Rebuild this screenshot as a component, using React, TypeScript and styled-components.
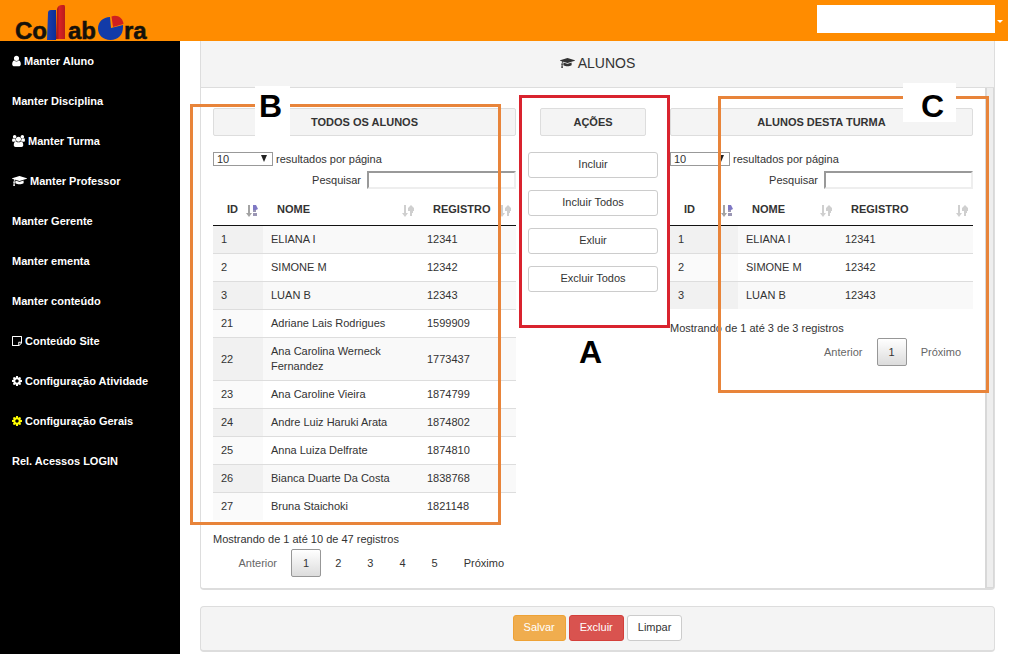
import React from "react";
import styled, { createGlobalStyle } from "styled-components";

const GlobalStyle = createGlobalStyle`
  *, *::before, *::after { box-sizing: border-box; }
  body {
    margin: 0;
    background: #fff;
    color: #333;
    font-family: "Liberation Sans", Arial, sans-serif;
    font-size: 11px;
    line-height: 15px;
  }
  button, input, select { font: inherit; color: inherit; }
`;

const Page = styled.div`
  display: flex;
  flex-direction: column;
  min-height: 100vh;
  padding-right: 2px;
`;

const TopBar = styled.header`
  display: flex;
  align-items: flex-start;
  justify-content: space-between;
  height: 41px;
  padding: 0 5px 0 15px;
  background: #ff8c00;
`;

const Logo = styled.svg`
  display: block;
  width: 136px;
  height: 41px;
  overflow: visible;
`;

const UserMenu = styled.button`
  display: flex;
  align-items: center;
  gap: 2px;
  height: 28px;
  margin-top: 5px;
  padding: 0;
  border: 0;
  background: none;
`;

const UserName = styled.span`
  width: 178px;
  height: 28px;
  background: #fff;
`;

const Caret = styled.span`
  margin-top: 4px;
  border: 3px solid transparent;
  border-top-color: #fff;
  border-bottom: 0;
`;

const Columns = styled.div`
  display: flex;
  flex: 1;
`;

const Sidebar = styled.nav`
  flex: 0 0 180px;
  background: #000;
`;

const MenuList = styled.ul`
  margin: 0;
  padding: 0;
  list-style: none;
`;

const MenuLink = styled.a`
  display: flex;
  align-items: center;
  gap: 3px;
  height: 40px;
  padding: 0 12px;
  color: #fff;
  font-weight: bold;
  text-decoration: none;
`;

const Main = styled.main`
  flex: 1;
  min-width: 0;
  padding: 0 13px 3px 20px;
`;

const Panel = styled.section`
  border: 1px solid #ddd;
  border-top: 0;
  border-bottom-width: 2px;
  border-radius: 0 0 4px 4px;
`;

const PanelTitle = styled.h1`
  display: flex;
  align-items: center;
  justify-content: center;
  gap: 3px;
  height: 47px;
  margin: 0;
  padding-bottom: 2px;
  border-bottom: 1px solid #ddd;
  background: #f4f4f4;
  font-size: 14px;
  font-weight: normal;
`;

const PanelBody = styled.div`
  display: flex;
`;

const Workspace = styled.div`
  flex: 1;
  min-width: 0;
  display: grid;
  grid-template-columns: minmax(0, 1fr) 154px minmax(0, 1fr);
  align-items: start;
  padding: 20px 12px 11px;
`;

const ScrollTrack = styled.div`
  flex: 0 0 9px;
  border: solid #d8d8d8;
  border-width: 0 1px 1px 2px;
  background: #eee;
`;

const Column = styled.div`
  position: relative;
`;

const ActionsColumn = styled(Column)`
  display: flex;
  flex-direction: column;
  gap: 12px;
  padding: 0 12px;
  z-index: 1;
`;

const BoxTitle = styled.h2<{ $inset?: boolean }>`
  height: 28px;
  margin: ${(p) => (p.$inset ? "0 12px 4px" : "0 0 15px")};
  border: 1px solid #ddd;
  border-radius: 2px;
  background: #f4f4f4;
  font-size: 11px;
  line-height: 26px;
  text-align: center;
`;

const LengthRow = styled.label`
  display: flex;
  align-items: center;
  gap: 3px;
  height: 16px;
  margin-bottom: 4px;
`;

const SelectBox = styled.span`
  position: relative;
  display: flex;
`;

const Select = styled.select`
  appearance: none;
  width: 60px;
  height: 14px;
  padding: 0 3px;
  border: 1px solid #999;
  border-radius: 0;
  background: #fff;
  line-height: 12px;
`;

const SelectArrow = styled.svg`
  position: absolute;
  top: 3px;
  right: 5px;
  width: 8px;
  height: 7px;
  pointer-events: none;
`;

const SearchRow = styled.label`
  display: flex;
  align-items: center;
  justify-content: flex-end;
  gap: 6px;
  height: 18px;
  margin-bottom: 4px;
`;

const SearchInput = styled.input`
  width: 149px;
  height: 18px;
  padding: 0 2px;
  border: 2px solid #eee;
  border-top-color: #999;
  border-left-color: #999;
  background: #fff;
`;

const Table = styled.table`
  width: 100%;
  border-collapse: separate;
  border-spacing: 0;
  table-layout: fixed;
`;

const Col = styled.col<{ $w?: number }>`
  width: ${(p) => (p.$w ? `${p.$w}px` : "auto")};
`;

const Th = styled.th`
  height: 33px;
  padding: 0 4px 0 14px;
  border-bottom: 1px solid #111;
  text-align: left;
`;

const ThInner = styled.div`
  display: flex;
  align-items: center;
  justify-content: space-between;
  white-space: nowrap;

  svg { margin-top: 4px; }
`;

const Tr = styled.tr`
  &:nth-child(odd) { background: #f9f9f9; }
  & > td:first-child { background: #fafafa; }
  &:nth-child(odd) > td:first-child { background: #f1f1f1; }
  & + & > td { border-top: 1px solid #ddd; }
`;

const Td = styled.td`
  padding: 6px 8px;
`;

const Info = styled.p`
  margin: 12px 0 2px;
`;

const Pager = styled.div`
  display: flex;
  justify-content: flex-end;
  gap: 2px;
`;

const PageButton = styled.button<{ $current?: boolean; $muted?: boolean }>`
  height: 28px;
  padding: 0 11px;
  border: 1px solid ${(p) => (p.$current ? "#979797" : "transparent")};
  border-radius: 2px;
  background: ${(p) => (p.$current ? "linear-gradient(#fff, #dcdcdc)" : "transparent")};
  color: ${(p) => (p.$muted ? "#666" : "#333")};
`;

const tones = {
  plain: { bg: "#fff", border: "#ccc", text: "#333" },
  warning: { bg: "#f0ad4e", border: "#eea236", text: "#fff" },
  danger: { bg: "#d9534f", border: "#d43f3a", text: "#fff" },
};

const Button = styled.button<{ $tone?: keyof typeof tones }>`
  height: 26px;
  padding: 0 10px 2px;
  border: 1px solid ${(p) => tones[p.$tone ?? "plain"].border};
  border-radius: 3px;
  background: ${(p) => tones[p.$tone ?? "plain"].bg};
  color: ${(p) => tones[p.$tone ?? "plain"].text};
`;

const FooterPanel = styled.footer`
  display: flex;
  justify-content: center;
  gap: 3px;
  margin-top: 16px;
  padding: 8px 0 9px;
  border: 1px solid #ddd;
  border-bottom-width: 2px;
  border-radius: 4px;
  background: #f4f4f4;
`;

/* Frames and letters drawn over the columns */
const Frame = styled.div<{ $color: string; $inset: string }>`
  position: absolute;
  inset: ${(p) => p.$inset};
  border: 3px solid ${(p) => p.$color};
  pointer-events: none;
`;

const Letter = styled.span<{ $inset: string; $pad: string }>`
  position: absolute;
  inset: ${(p) => p.$inset};
  padding: ${(p) => p.$pad};
  background: #fff;
  color: #000;
  font-size: 32px;
  font-weight: bold;
  line-height: 32px;
`;

const icons = {
  user: {
    x: 0,
    w: 1280,
    d: "M1280 1399q0 109-62.5 187t-150.5 78h-854q-88 0-150.5-78t-62.5-187q0-85 8.5-160.5t31.5-152 58.5-131 94-89 134.5-34.5q131 128 313 128t313-128q76 0 134.5 34.5t94 89 58.5 131 31.5 152 8.5 160.5zm-256-887q0 159-112.5 271.5t-271.5 112.5-271.5-112.5-112.5-271.5 112.5-271.5 271.5-112.5 271.5 112.5 112.5 271.5z",
  },
  group: {
    x: 64,
    w: 1920,
    d: "M657 896q-162 5-265 128h-134q-82 0-138-40.5t-56-118.5q0-353 124-353 6 0 43.5 21t97.5 42.5 119 21.5q67 0 133-23-5 37-5 66 0 159 90 287zm1071 637q0 120-73 189.5t-194 69.5h-874q-121 0-194-69.5t-73-189.5q0-53 3.5-103.5t14-109 26.5-108.5 43-97.5 62-81 85.5-53.5 111.5-20q10 0 43 21.5t73 48 107 48 135 21.5 135-21.5 107-48 73-48 43-21.5q61 0 111.5 20t85.5 53.5 62 81 43 97.5 26.5 108.5 14 109 3.5 103.5zm-1024-1277q0 106-75 181t-181 75-181-75-75-181 75-181 181-75 181 75 75 181zm704 384q0 159-112.5 271.5t-271.5 112.5-271.5-112.5-112.5-271.5 112.5-271.5 271.5-112.5 271.5 112.5 112.5 271.5zm576 225q0 78-56 118.5t-138 40.5h-134q-103-123-265-128 90-128 90-287 0-29-5-66 66 23 133 23 59 0 119-21.5t97.5-42.5 43.5-21q124 0 124 353zm-128-609q0 106-75 181t-181 75-181-75-75-181 75-181 181-75 181 75 75 181z",
  },
  cap: {
    x: 0,
    w: 2304,
    d: "M1774 836l18 316q4 69-82 128t-235 93.5-323 34.5-323-34.5-235-93.5-82-128l18-316 574 181q22 7 48 7t48-7zm530-324q0 23-22 31l-1120 352q-4 1-10 1t-10-1l-652-206q-43 34-71 111.5t-34 178.5q63 36 63 109 0 69-58 107l58 433q2 14-8 25-9 11-24 11h-192q-15 0-24-11-10-11-8-25l58-433q-58-38-58-107 0-73 65-111 11-207 98-330l-333-104q-22-8-22-31t22-31l1120-352q4-1 10-1t10 1l1120 352q22 8 22 31z",
  },
  note: {
    x: 0,
    w: 1536,
    d: "M96 128h1344q96 0 96 96v928q0 64-48 112l-352 352q-48 48-112 48H96q-96 0-96-96V224q0-96 96-96zM150 278v1236h810v-394q0-96 96-96h330V278zM1110 1174v330l276-330z",
  },
  cog: {
    x: 0,
    w: 1536,
    d: "M1024 896q0-106-75-181t-181-75-181 75-75 181 75 181 181 75 181-75 75-181zm512-109v222q0 12-8 23t-20 13l-185 28q-19 54-39 91 35 50 107 138 10 12 10 25t-9 23q-27 37-99 108t-94 71q-12 0-26-9l-138-108q-44 23-91 38-16 136-29 186-7 28-36 28h-222q-14 0-24.5-8.5t-11.5-21.5l-28-184q-49-16-90-37l-141 107q-10 9-25 9-14 0-25-11-126-114-165-168-7-10-7-23 0-12 8-23 15-21 51-66.5t54-70.5q-27-50-41-99l-183-27q-13-2-21-12.5t-8-23.5v-222q0-12 8-23t19-13l186-28q14-46 39-92-40-57-107-138-10-12-10-24 0-10 9-23 26-36 98.5-107.5t94.5-71.5q13 0 26 10l138 107q44-23 91-38 16-136 29-186 7-28 36-28h222q14 0 24.5 8.5t11.5 21.5l28 184q49 16 90 37l142-107q9-9 24-9 13 0 25 10 129 119 165 170 7 8 7 22 0 12-8 23-15 21-51 66.5t-54 70.5q26 50 41 98l183 28q13 2 21 12.5t8 23.5z",
  },
};

type IconName = keyof typeof icons;

function Icon({ name, color = "currentColor" }: { name: IconName; color?: string }) {
  const { x, w, d } = icons[name];
  return (
    <svg width={Math.round((w / 1792) * 12)} height={12} viewBox={`${x} 0 ${w} 1792`} fill={color} fillRule={name === "note" ? "evenodd" : "nonzero"} aria-hidden="true">
      <path d={d} />
    </svg>
  );
}

function SortIcon({ active }: { active?: boolean }) {
  return (
    <svg width="14" height="14" viewBox="0 0 14 14" aria-hidden="true">
      <path d="M3 1h2v8h2l-3 4-3-4h2z" fill={active ? "#a3a3a3" : "#cfcfcf"} />
      {active ? (
        <>
          <path d="M8 1h3l2 4-2 1H8z" fill="#7f78c4" />
          <path d="M8 6h3v2H8zM8 9h4v3H8z" fill="#9a96b4" />
        </>
      ) : (
        <path d="M9 12V7H7V4l3-3 3 3v3h-1v2h-1v3z" fill="#cfcfcf" />
      )}
    </svg>
  );
}

const menu: { label: string; icon?: IconName; color?: string }[] = [
  { label: "Manter Aluno", icon: "user" },
  { label: "Manter Disciplina" },
  { label: "Manter Turma", icon: "group" },
  { label: "Manter Professor", icon: "cap" },
  { label: "Manter Gerente" },
  { label: "Manter ementa" },
  { label: "Manter conteúdo" },
  { label: "Conteúdo Site", icon: "note" },
  { label: "Configuração Atividade", icon: "cog" },
  { label: "Configuração Gerais", icon: "cog", color: "#ff0" },
  { label: "Rel. Acessos LOGIN" },
];

type Student = [string, string, string];

const classStudents: Student[] = [
  ["1", "ELIANA I", "12341"],
  ["2", "SIMONE M", "12342"],
  ["3", "LUAN B", "12343"],
];

const allStudents: Student[] = [
  ...classStudents,
  ["21", "Adriane Lais Rodrigues", "1599909"],
  ["22", "Ana Carolina Werneck Fernandez", "1773437"],
  ["23", "Ana Caroline Vieira", "1874799"],
  ["24", "Andre Luiz Haruki Arata", "1874802"],
  ["25", "Anna Luiza Delfrate", "1874810"],
  ["26", "Bianca Duarte Da Costa", "1838768"],
  ["27", "Bruna Staichoki", "1821148"],
];

type StudentTableProps = {
  title: string;
  rows: Student[];
  widths: [number, number];
  info: string;
  pages: string[];
  lastPage?: boolean;
};

function StudentTable({ title, rows, widths, info, pages, lastPage }: StudentTableProps) {
  return (
    <>
      <BoxTitle>{title}</BoxTitle>
      <LengthRow>
        <SelectBox>
          <Select defaultValue="10">
            <option>10</option>
            <option>25</option>
            <option>50</option>
          </Select>
          <SelectArrow viewBox="0 0 8 7" aria-hidden="true">
            <path d="M1 0h6L4 7z" fill="#222" />
          </SelectArrow>
        </SelectBox>
        resultados por página
      </LengthRow>
      <SearchRow>
        Pesquisar
        <SearchInput type="search" />
      </SearchRow>
      <Table>
        <colgroup>
          <Col $w={widths[0]} />
          <Col />
          <Col $w={widths[1]} />
        </colgroup>
        <thead>
          <tr>
            {["ID", "NOME", "REGISTRO"].map((name, i) => (
              <Th key={name} scope="col">
                <ThInner>
                  {name}
                  <SortIcon active={i === 0} />
                </ThInner>
              </Th>
            ))}
          </tr>
        </thead>
        <tbody>
          {rows.map((row) => (
            <Tr key={row[0]}>
              {row.map((cell) => (
                <Td key={cell}>{cell}</Td>
              ))}
            </Tr>
          ))}
        </tbody>
      </Table>
      <Info>{info}</Info>
      <Pager>
        <PageButton $muted>Anterior</PageButton>
        {pages.map((p, i) => (
          <PageButton key={p} $current={i === 0}>{p}</PageButton>
        ))}
        <PageButton $muted={lastPage}>Próximo</PageButton>
      </Pager>
    </>
  );
}

function CollaboraLogo() {
  return (
    <Logo viewBox="0 0 136 41" role="img" aria-label="Collabora">
      <defs>
        <linearGradient id="blueBar">
          <stop offset="0" stopColor="#1b3fae" />
          <stop offset="1" stopColor="#0b2f96" />
        </linearGradient>
        <linearGradient id="redBar">
          <stop offset="0" stopColor="#8e1616" />
          <stop offset="0.4" stopColor="#d92222" />
          <stop offset="1" stopColor="#b81c1c" />
        </linearGradient>
      </defs>
      <g fill="#15110a" stroke="#15110a" strokeWidth="0.5" fontFamily="Liberation Sans, Arial, sans-serif" fontWeight="bold" fontSize="24">
        <text x="0" y="39">Co</text>
        <text x="53" y="39">ab</text>
        <text x="109" y="39">ra</text>
      </g>
      <path d="M32 40L33 13q0-3 3-3h5V40z" fill="url(#blueBar)" />
      <path d="M41 39L42 9q1-4 5-4h2q1 0 1 2V39z" fill="url(#redBar)" />
      <path d="M96 28L95 17C88 17 83 22 83 28.500C83 35 88 40 95.500 40C103 40 108 35 108 27V25z" fill="#123ba8" />
      <path d="M98 27L96.500 16.500C102 14 108 18 108.500 24z" fill="#cf1f1f" />
    </Logo>
  );
}

const ORANGE = "#e8843a";
const RED = "#d9232e";

export default function App() {
  return (
    <>
      <GlobalStyle />
      <Page>
        <TopBar>
          <CollaboraLogo />
          <UserMenu aria-label="Menu do usuário">
            <UserName />
            <Caret />
          </UserMenu>
        </TopBar>
        <Columns>
          <Sidebar>
            <MenuList>
              {menu.map((item) => (
                <li key={item.label}>
                  <MenuLink href="#">
                    {item.icon && <Icon name={item.icon} color={item.color} />}
                    {item.label}
                  </MenuLink>
                </li>
              ))}
            </MenuList>
          </Sidebar>
          <Main>
            <Panel>
              <PanelTitle>
                <Icon name="cap" />
                ALUNOS
              </PanelTitle>
              <PanelBody>
                <Workspace>
                  <Column>
                    <StudentTable
                      title="TODOS OS ALUNOS"
                      rows={allStudents}
                      widths={[50, 97]}
                      info="Mostrando de 1 até 10 de 47 registros"
                      pages={["1", "2", "3", "4", "5"]}
                    />
                    <Frame $color={ORANGE} $inset="-4px 15px 52px -23px" />
                    <Letter $inset="-22px auto auto 42px" $pad="4px 8px 14px 4px">B</Letter>
                  </Column>
                  <ActionsColumn>
                    <BoxTitle $inset>AÇÕES</BoxTitle>
                    <Button>Incluir</Button>
                    <Button>Incluir Todos</Button>
                    <Button>Exluir</Button>
                    <Button>Excluir Todos</Button>
                    <Frame $color={RED} $inset="-13px 0 -36px 3px" />
                    <Letter $inset="auto auto -80px 59px" $pad="4px 4px">A</Letter>
                  </ActionsColumn>
                  <Column>
                    <StudentTable
                      title="ALUNOS DESTA TURMA"
                      rows={classStudents}
                      widths={[68, 136]}
                      info="Mostrando de 1 até 3 de 3 registros"
                      pages={["1"]}
                      lastPage
                    />
                    <Frame $color={ORANGE} $inset="-12px -16px -27px 48px" />
                    <Letter $inset="-25px 17px auto auto" $pad="7px 12px 0 18px">C</Letter>
                  </Column>
                </Workspace>
                <ScrollTrack />
              </PanelBody>
            </Panel>
            <FooterPanel>
              <Button $tone="warning">Salvar</Button>
              <Button $tone="danger">Excluir</Button>
              <Button>Limpar</Button>
            </FooterPanel>
          </Main>
        </Columns>
      </Page>
    </>
  );
}
